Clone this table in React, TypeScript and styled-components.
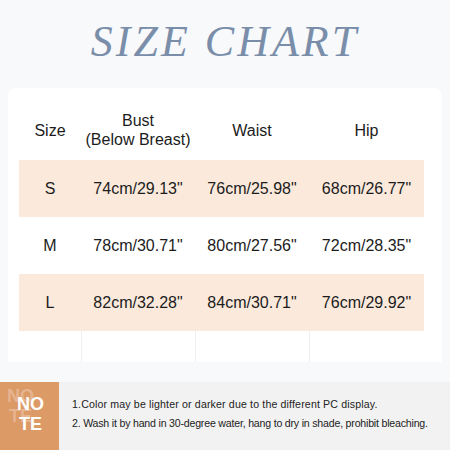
import styled, { createGlobalStyle } from "styled-components";

interface SizeRow {
  size: string;
  bust: string;
  waist: string;
  hip: string;
}

const rows: SizeRow[] = [
  { size: "S", bust: '74cm/29.13"', waist: '76cm/25.98"', hip: '68cm/26.77"' },
  { size: "M", bust: '78cm/30.71"', waist: '80cm/27.56"', hip: '72cm/28.35"' },
  { size: "L", bust: '82cm/32.28"', waist: '84cm/30.71"', hip: '76cm/29.92"' },
];

// spacing tuned per line so widths match the print
const notes = [
  { text: "1.Color may be lighter or darker due to the different PC display.", spacing: 0.15 },
  {
    text: "2. Wash it by hand in 30-degree water, hang to dry in shade, prohibit bleaching.",
    spacing: -0.2,
  },
];

const App = () => {
  return (
    <Page>
      <GlobalStyle />
      <Header>
        <Title>SIZE CHART</Title>
      </Header>
      <Card>
        <Row>
          <Cell>Size</Cell>
          <Cell>
            Bust
            <br />
            (Below Breast)
          </Cell>
          <Cell>Waist</Cell>
          <Cell>Hip</Cell>
        </Row>
        {rows.map((r, i) => (
          <Row key={r.size} $tinted={i % 2 === 0} $height={57}>
            <Cell>{r.size}</Cell>
            <Cell>{r.bust}</Cell>
            <Cell>{r.waist}</Cell>
            <Cell>{r.hip}</Cell>
          </Row>
        ))}
        <FillerRow>
          <FillerCell />
          <FillerCell $line />
          <FillerCell $line />
          <FillerCell $line />
        </FillerRow>
      </Card>
      <Gap />
      <Note>
        <NoteBadge>
          <Ghost aria-hidden="true">
            NO
            <br />
            TE
          </Ghost>
          <BadgeText>
            NO
            <br />
            TE
          </BadgeText>
        </NoteBadge>
        <NoteList>
          {notes.map((n) => (
            <NoteLine key={n.text} $spacing={n.spacing}>
              {n.text}
            </NoteLine>
          ))}
        </NoteList>
      </Note>
    </Page>
  );
};

const GlobalStyle = createGlobalStyle`
  html, body {
    margin: 0;
    padding: 0;
    background: #f8f9fb;
  }
  body {
    font-family: "Liberation Sans", Arial, sans-serif;
    color: #1c1c1c;
  }
`;

const Page = styled.div`
  width: 450px;
  height: 450px;
  display: flex;
  flex-direction: column;
  background: #f8f9fb;
  overflow: hidden;
`;

const Header = styled.header`
  height: 88px;
  display: flex;
  justify-content: center;
  align-items: flex-start;
`;

const Title = styled.h1`
  margin: 18px 0 0 0;
  font-family: "Liberation Serif", "Times New Roman", serif;
  font-style: italic;
  font-weight: 400;
  font-size: 44px;
  letter-spacing: 3px;
  color: #7a8eaa;
  line-height: 1.1;
`;

const Card = styled.section`
  margin: 0 8px;
  padding: 12px 18px 0 11px;
  background: #ffffff;
  border-radius: 8px 8px 0 0;
  display: flex;
  flex-direction: column;
`;

const Row = styled.div<{ $tinted?: boolean; $height?: number }>`
  display: grid;
  grid-template-columns: 62px 114px 114px 115px;
  height: ${(p) => p.$height ?? 60}px;
  background: ${(p) => (p.$tinted ? "#fbeadc" : "transparent")};
`;

const Cell = styled.div`
  display: flex;
  align-items: center;
  justify-content: center;
  text-align: center;
  font-size: 16px;
  line-height: 19px;
  color: #1c1c1c;
`;

const FillerRow = styled.div`
  display: grid;
  grid-template-columns: 62px 114px 114px 115px;
  height: 31px;
`;

const FillerCell = styled.div<{ $line?: boolean }>`
  border-left: ${(p) => (p.$line ? "1px solid #efefef" : "none")};
`;

const Gap = styled.div`
  height: 20px;
`;

const Note = styled.footer`
  flex: 1;
  display: flex;
  background: #f2f2f2;
`;

const NoteBadge = styled.div`
  position: relative;
  width: 59px;
  background: #dc9a67;
  display: flex;
  align-items: center;
  justify-content: center;
`;

const BadgeText = styled.div`
  position: relative;
  margin: 0 0 4px 2px;
  font-weight: 700;
  font-size: 18px;
  line-height: 20px;
  color: #ffffff;
  text-align: center;
`;

const Ghost = styled.div`
  position: absolute;
  left: 7px;
  top: 4px;
  font-weight: 700;
  font-size: 18px;
  line-height: 20px;
  color: #e6b490;
  text-align: center;
`;

const NoteList = styled.div`
  display: flex;
  flex-direction: column;
  justify-content: center;
  gap: 6px;
  padding: 0 0 4px 13px;
`;

const NoteLine = styled.p<{ $spacing: number }>`
  margin: 0;
  font-size: 10.6px;
  line-height: 13px;
  letter-spacing: ${(p) => p.$spacing}px;
  color: #222222;
  white-space: nowrap;
`;

export default App;
